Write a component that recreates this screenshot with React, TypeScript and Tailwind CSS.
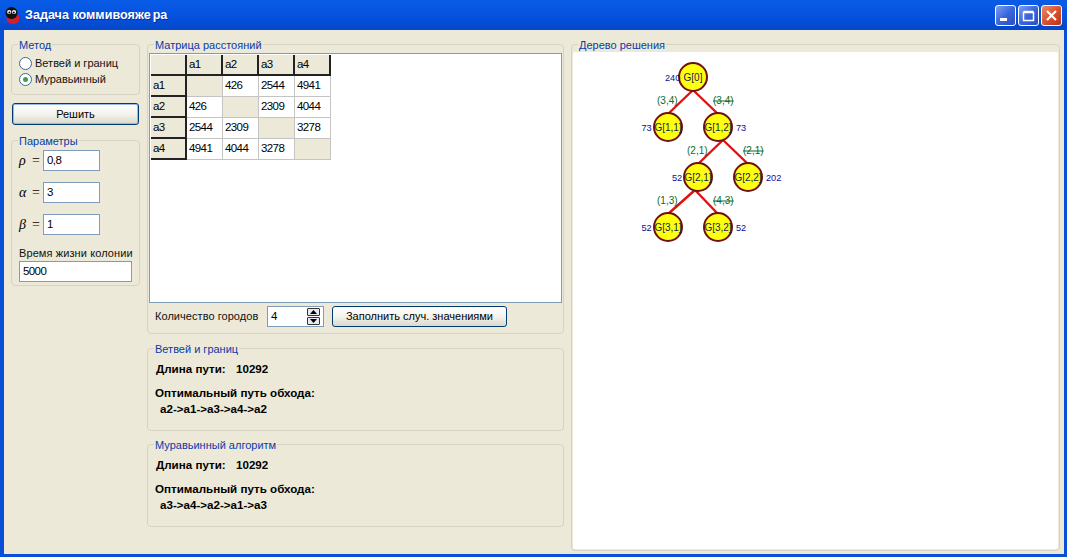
import type { ReactNode } from "react";

const font = { fontFamily: '"Liberation Sans", Arial, sans-serif' };

const headers = ["a1", "a2", "a3", "a4"];
const matrix = [
  ["", "426", "2544", "4941"],
  ["426", "", "2309", "4044"],
  ["2544", "2309", "", "3278"],
  ["4941", "4044", "3278", ""],
];

const nodes = [
  { id: "G[0]", x: 693, y: 77, w: "240", wx: 665 },
  { id: "G[1,1]", x: 668, y: 127, w: "73", wx: 641.5 },
  { id: "G[1,2]", x: 718, y: 127, w: "73", wx: 736 },
  { id: "G[2,1]", x: 698, y: 177, w: "52", wx: 672 },
  { id: "G[2,2]", x: 748, y: 177, w: "202", wx: 766 },
  { id: "G[3,1]", x: 668, y: 227, w: "52", wx: 641.5 },
  { id: "G[3,2]", x: 718, y: 227, w: "52", wx: 736 },
];

const edges = [
  [693, 90, 668, 114],
  [693, 90, 718, 114],
  [723, 140, 698, 164],
  [723, 140, 748, 164],
  [695, 190, 668, 214],
  [695, 190, 718, 214],
];

const edgeLabels = [
  { t: "(3,4)", x: 657, y: 104, cut: false },
  { t: "(3,4)", x: 713, y: 104, cut: true },
  { t: "(2,1)", x: 687, y: 154, cut: false },
  { t: "(2,1)", x: 743, y: 154, cut: true },
  { t: "(1,3)", x: 657, y: 204, cut: false },
  { t: "(4,3)", x: 713, y: 204, cut: true },
];

function Group({ title, className, children }: { title: string; className: string; children?: ReactNode }) {
  return (
    <div className={`relative rounded-[4px] border border-[#d6d3c3] ${className}`}>
      <span className="absolute left-[6px] top-[-6px] bg-[#ece9d8] px-[1px] text-[11px] leading-[13px] text-[#0a3aa8]">
        {title}
      </span>
      {children}
    </div>
  );
}

function Radio({ label, checked }: { label: string; checked?: boolean }) {
  return (
    <div className="flex h-[16px] items-center gap-[3px]">
      <span className="flex h-[13px] w-[13px] items-center justify-center rounded-full border border-[#3d6a8f] bg-white">
        {checked && <span className="h-[5px] w-[5px] rounded-full bg-[#3fa142]" />}
      </span>
      <span className="text-[11px] text-[#111]">{label}</span>
    </div>
  );
}

function Field({ value, className }: { value: string; className: string }) {
  return (
    <div className={`flex h-[21px] items-center border border-[#7f9db9] bg-white pl-[3px] text-[11.5px] tracking-[-0.6px] text-black ${className}`}>
      {value}
    </div>
  );
}

function Param({ symbol, value }: { symbol: string; value: string }) {
  return (
    <div className="flex h-[21px] items-center">
      <span className="flex w-[24px] items-center text-[14px] text-black" style={{ fontFamily: '"Liberation Serif", serif' }}>
        <span className="w-[13px] italic">{symbol}</span>
        <span>=</span>
      </span>
      <Field value={value} className="w-[57px]" />
    </div>
  );
}

function XpButton({ label, className }: { label: string; className: string }) {
  return (
    <div className={`flex items-center justify-center rounded-[3px] border border-[#003c74] bg-gradient-to-b from-white via-[#f4f3ee] to-[#dcd8cb] text-[11px] text-black ${className}`}>
      {label}
    </div>
  );
}

function Result({ title, path, top }: { title: string; path: string; top: string }) {
  return (
    <Group title={title} className={`h-[83px] ${top}`}>
      <div className="pl-[8px] pt-[12px] text-[11.6px] font-bold leading-[15px] text-black">
        <div className="flex">
          <span className="w-[80px]">Длина пути:</span>
          <span>10292</span>
        </div>
        <div className="mt-[9px] ml-[-1px]">Оптимальный путь обхода:</div>
        <div className="mt-[1px] ml-[4px]">{path}</div>
      </div>
    </Group>
  );
}

function TitleButton({ kind }: { kind: "min" | "max" | "close" }) {
  const bg =
    kind === "close"
      ? "bg-gradient-to-br from-[#e88a6e] via-[#d9532f] to-[#b8311b]"
      : "bg-gradient-to-br from-[#7f9ff0] via-[#3a66dc] to-[#2a4fc4]";
  return (
    <div className={`flex h-[21px] w-[21px] items-center justify-center rounded-[3px] border border-white ${bg}`}>
      <svg width="13" height="13" viewBox="0 0 13 13">
        {kind === "min" && <rect x="1" y="9" width="7" height="3" fill="#fff" />}
        {kind === "max" && (
          <path d="M1.5 3.5h10v8h-10z M1.5 2.5h10" fill="none" stroke="#fff" strokeWidth="1.5" />
        )}
        {kind === "close" && <path d="M2 2l9 9M11 2l-9 9" stroke="#fff" strokeWidth="2.2" />}
      </svg>
    </div>
  );
}

export default function App() {
  return (
    <div className="flex h-[557px] w-[1067px] flex-col overflow-hidden bg-[#0a4fd8]" style={font}>
      {/* Title bar */}
      <div className="flex h-[30px] shrink-0 items-center bg-gradient-to-b from-[#0a5ce6] via-[#0553e0] to-[#0447c8] pl-[5px] pr-[5px]">
        <svg width="15" height="17" viewBox="0 0 15 17">
          <ellipse cx="8" cy="11.5" rx="6.5" ry="5.5" fill="#d0202c" />
          <circle cx="6.5" cy="6" r="6" fill="#111" />
          <circle cx="4.2" cy="5" r="2.1" fill="#fff" />
          <circle cx="9" cy="5" r="2.1" fill="#fff" />
          <circle cx="4.4" cy="5.4" r="1" fill="#000" />
          <circle cx="8.8" cy="5.4" r="1" fill="#000" />
        </svg>
        <span className="ml-[5px] text-[12.6px] font-bold text-white [text-shadow:1px_1px_#0a2f9a]">
          Задача коммивояже<span className="ml-[2px]">ра</span>
        </span>
        <div className="ml-auto flex gap-[2px]">
          <TitleButton kind="min" />
          <TitleButton kind="max" />
          <TitleButton kind="close" />
        </div>
      </div>

      {/* Window body */}
      <div className="ml-[4px] mr-[3px] flex h-[524px] shrink-0 bg-[#ece9d8] pl-[7px] pt-[14px]">
        {/* Left column */}
        <div className="w-[129px] shrink-0">
          <Group title="Метод" className="h-[51px] pl-[7px] pt-[10px]">
            <Radio label="Ветвей и границ" />
            <Radio label="Муравьинный" checked />
          </Group>
          <XpButton
            label="Решить"
            className="mx-[1px] mt-[8px] h-[22px] w-[127px] border-[#2b5aa8] shadow-[inset_0_0_0_1px_#9db8e8]"
          />
          <Group title="Параметры" className="mt-[15px] flex h-[146px] flex-col pl-[7px] pt-[9px]">
            <div className="flex flex-col gap-[11px]">
              <Param symbol="ρ" value="0,8" />
              <Param symbol="α" value="3" />
              <Param symbol="β" value="1" />
            </div>
            <div className="mt-[11px] h-[15px] text-[11px] leading-[15px] tracking-[0.1px] text-[#111]">Время жизни колонии</div>
            <Field value="5000" className="w-[113px]" />
          </Group>
        </div>

        {/* Centre column */}
        <div className="ml-[7px] w-[417px] shrink-0">
          <Group title="Матрица расстояний" className="h-[290px] px-[1px] pt-[8px]">
            <div className="h-[250px] border border-[#7f9db9] bg-white p-[1px]">
              <div className="grid w-fit grid-cols-[repeat(5,36px)] grid-rows-[repeat(5,21px)] text-[11.5px] tracking-[-0.6px] text-black">
                <div className="border-b-2 border-r-2 border-b-[#222] border-r-[#222] bg-[#ece9d8]" />
                {headers.map((h) => (
                  <div
                    key={h}
                    className="flex items-center border-b-2 border-r-2 border-b-[#222] border-r-[#222] bg-[#ece9d8] pl-[2px]"
                  >
                    {h}
                  </div>
                ))}
                {matrix.map((row, i) => [
                  <div
                    key={`h${i}`}
                    className="flex items-center border-b-2 border-r-2 border-b-[#222] border-r-[#222] bg-[#ece9d8] pl-[2px]"
                  >
                    {headers[i]}
                  </div>,
                  ...row.map((v, j) => (
                    <div
                      key={`${i}-${j}`}
                      className={`flex items-center border-b border-r border-[#c4c4c4] pl-[2px] ${i === j ? "bg-[#ece9d8]" : "bg-white"}`}
                    >
                      {v}
                    </div>
                  )),
                ])}
              </div>
            </div>
            <div className="mt-[3px] flex h-[21px] items-center pl-[6px]">
              <span className="w-[112px] text-[11px] tracking-[0.05px] text-[#111]">Количество городов</span>
              <div className="flex h-[21px] w-[57px] items-center justify-between border border-[#7f9db9] bg-white pl-[3px] pr-[3px] text-[11.5px] text-black">
                4
                <div className="flex flex-col">
                  <div className="flex h-[8px] w-[13px] items-center justify-center rounded-[1px] border border-[#333] bg-[#e8e8f0]">
                    <svg width="7" height="4" viewBox="0 0 7 4">
                      <path d="M3.5 0L7 4H0z" fill="#000" />
                    </svg>
                  </div>
                  <div className="mt-[1px] flex h-[8px] w-[13px] items-center justify-center rounded-[1px] border border-[#333] bg-[#e8e8f0]">
                    <svg width="7" height="4" viewBox="0 0 7 4">
                      <path d="M0 0h7L3.5 4z" fill="#000" />
                    </svg>
                  </div>
                </div>
              </div>
              <XpButton label="Заполнить случ. значениями" className="ml-[8px] h-[21px] w-[175px]" />
            </div>
          </Group>
          <Result title="Ветвей и границ" path="a2->a1->a3->a4->a2" top="mt-[14px]" />
          <Result title="Муравьинный алгоритм" path="a3->a4->a2->a1->a3" top="mt-[13px]" />
        </div>

        {/* Solution tree */}
        <div className="ml-[7px] w-[489px] shrink-0">
          <Group title="Дерево решения" className="h-[507px] px-[1px] pb-[1px] pt-[7px]">
            <div className="h-[497px] rounded-[2px] bg-white">
              <svg width="487" height="497" viewBox="573 52 487 497" fontFamily='"Liberation Sans", Arial, sans-serif'>
                {edges.map((e, i) => (
                  <line key={i} x1={e[0]} y1={e[1]} x2={e[2]} y2={e[3]} stroke="#e01010" strokeWidth="2.4" />
                ))}
                {edgeLabels.map((l, i) => (
                  <text
                    key={i}
                    x={l.x}
                    y={l.y}
                    fontSize="10"
                    fill="#0a6b2a"
                    textDecoration={l.cut ? "line-through" : undefined}
                  >
                    {l.t}
                  </text>
                ))}
                {nodes.map((n) => (
                  <g key={n.id}>
                    <circle cx={n.x} cy={n.y} r="14" fill="#ffff10" stroke="#701010" strokeWidth="2" />
                    <text x={n.x} y={n.y + 3.5} fontSize="10" fill="#1a1a50" textAnchor="middle">
                      {n.id}
                    </text>
                    <text x={n.wx} y={n.y + 3.5} fontSize="9.2" fill="#0a0aa0">
                      {n.w}
                    </text>
                  </g>
                ))}
              </svg>
            </div>
          </Group>
        </div>
      </div>
    </div>
  );
}
